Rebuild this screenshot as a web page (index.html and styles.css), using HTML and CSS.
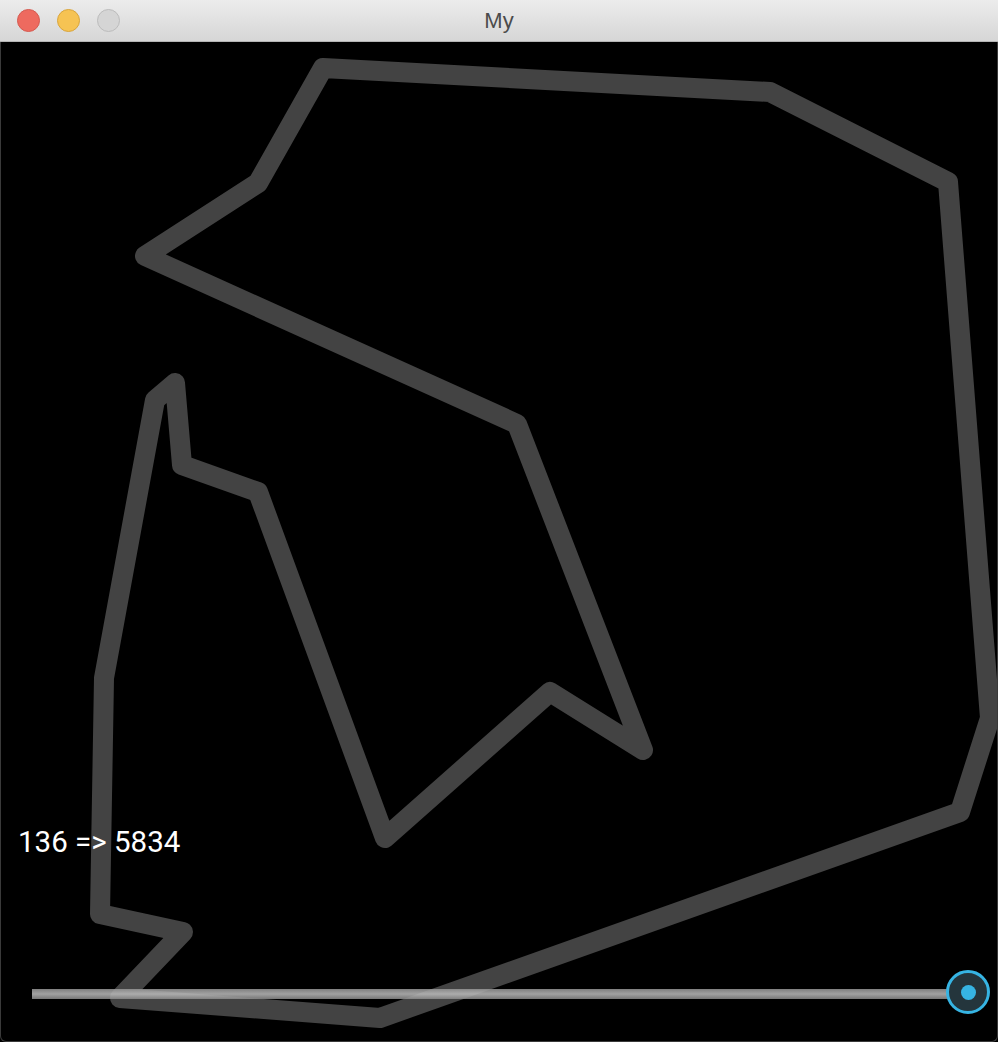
FILE: index.html
```html
<!DOCTYPE html>
<html>
<head>
<meta charset="utf-8">
<link rel="stylesheet" href="styles.css">
</head>
<body>
<div class="window">
  <div class="titlebar">
    <div class="lights">
      <span class="light red"></span>
      <span class="light yellow"></span>
      <span class="light gray"></span>
    </div>
    <div class="title">My</div>
  </div>
  <div class="canvas">
    <svg class="drawing" width="998" height="1000" viewBox="0 42 998 1000">
      <polygon class="path" points="323,68 770,92 948,182 990,718 960,812 380,1018 120,998 183,932 100,914 104,678 155,400 175,383 182,465 258,492 385,838 550,692 643,750 517,424 145,256 258,183"/>
    </svg>
    <div class="readout">136 =&gt; 5834</div>
    <div class="slider">
      <div class="track"></div>
      <div class="thumb"><div class="dot"></div></div>
    </div>
  </div>
</div>
</body>
</html>
```
FILE: styles.css
```css
html, body {
  margin: 0;
  padding: 0;
  background: #000;
  overflow: hidden;
}
.window {
  width: 998px;
  height: 1042px;
  display: flex;
  flex-direction: column;
  font-family: Roboto, "Liberation Sans", sans-serif;
}
.titlebar {
  height: 41px;
  flex: 0 0 41px;
  background: linear-gradient(#ececec, #d6d6d6);
  border-bottom: 1px solid #b4b4b4;
  position: relative;
  display: flex;
  align-items: center;
  justify-content: center;
}
.lights {
  position: absolute;
  left: 17px;
  top: 9px;
  display: flex;
  gap: 17px;
}
.light {
  width: 23px;
  height: 23px;
  border-radius: 50%;
  box-sizing: border-box;
}
.light.red { background: #ee6a5f; border: 1px solid #d55a50; }
.light.yellow { background: #f6c353; border: 1px solid #d9a53c; }
.light.gray { background: #d5d5d5; border: 1px solid #bcbcbc; }
.title {
  font-family: "Helvetica Neue", "Liberation Sans", Roboto, sans-serif;
  font-size: 22px;
  color: #4b4b4b;
  line-height: 1;
  padding-top: 1px;
}
.canvas {
  flex: 1;
  position: relative;
  background: #000;
  border-left: 1px solid #3a3a3a;
  border-right: 1px solid #3a3a3a;
  border-bottom: 1px solid #3a3a3a;
  border-radius: 0 0 6px 6px;
  overflow: hidden;
}
.drawing {
  position: absolute;
  left: -1px;
  top: 0;
}
.path {
  fill: none;
  stroke: #434343;
  stroke-width: 20;
  stroke-linejoin: round;
}
.readout {
  position: absolute;
  left: 17px;
  top: 782px;
  color: #fff;
  font-size: 29.5px;
  line-height: 36px;
}
.slider {
  position: absolute;
  left: 31px;
  top: 927px;
  width: 960px;
  height: 46px;
}
.track {
  position: absolute;
  left: 0;
  top: 20px;
  width: 920px;
  height: 10px;
  background: linear-gradient(rgba(150,150,150,0.85), rgba(190,190,190,0.85) 50%, rgba(140,140,140,0.85));
}
.thumb {
  position: absolute;
  left: 914px;
  top: 1px;
  width: 44px;
  height: 44px;
  box-sizing: border-box;
  border: 3px solid #36b4e3;
  border-radius: 50%;
  background: #24353c;
  display: flex;
  align-items: center;
  justify-content: center;
}
.dot {
  width: 15px;
  height: 15px;
  border-radius: 50%;
  background: #36b4e3;
}
```
